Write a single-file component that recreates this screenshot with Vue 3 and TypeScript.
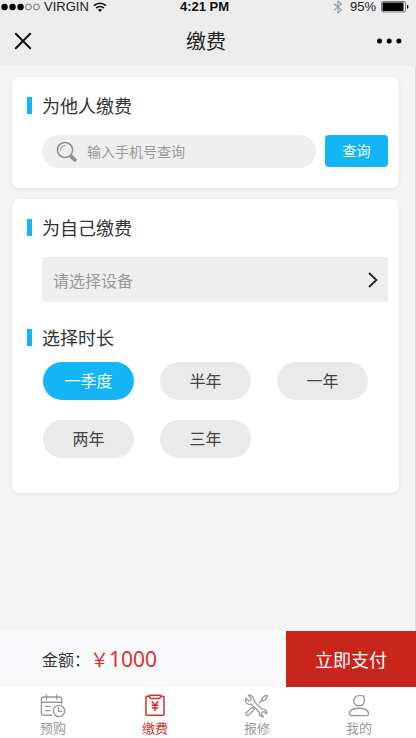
<script setup lang="ts">
import { ref } from 'vue'

const phone = ref<string>('')
const device = ref<string>('')
const durations: string[] = ['一季度', '半年', '一年', '两年', '三年']
const selected = ref<string>('一季度')
const amount = ref<number>(1000)
</script>

<template>
  <div class="page">
    <div class="status">
      <div class="status-left">
        <svg width="40" height="8" viewBox="0 0 40 8" aria-hidden="true">
          <g fill="#000"><circle cx="4.500" cy="4" r="3.200" /><circle cx="12.500" cy="4" r="3.200" /><circle cx="20.500" cy="4" r="3.200" /></g>
          <g fill="none" stroke="#555" stroke-width="0.800"><circle cx="28.500" cy="4" r="2.900" /><circle cx="36.500" cy="4" r="2.900" /></g>
        </svg>
        <span class="carrier">VIRGIN</span>
        <svg width="14" height="10" viewBox="0 0 14 10" fill="none" stroke="#111" stroke-width="1.7" aria-hidden="true">
          <path d="M1 3.7C4.4.4 9.6.4 13 3.7M3.2 6c2.2-2 5.4-2 7.6 0" />
          <path d="M4.9 7.8c1.2-1.1 3-1.1 4.2 0L7 10z" fill="#111" stroke="none" />
        </svg>
      </div>
      <span class="clock">4:21 PM</span>
      <div class="status-right">
        <svg width="10" height="14" viewBox="0 0 10 14" fill="none" stroke="#999" stroke-width="1.1" aria-hidden="true">
          <path d="M1 3.8l7.4 6L5 12.8V1l3.4 3L1 10.2" />
        </svg>
        <span class="battery-text">95%</span>
        <svg width="28" height="12" viewBox="0 0 28 12" aria-hidden="true">
          <rect x=".5" y=".5" width="24" height="10.5" rx="1.5" fill="none" stroke="#777" />
          <rect x="1.5" y="1.5" width="21" height="8.5" rx=".5" fill="#000" />
          <path d="M26 3.8c2 .6 2 3.4 0 4z" fill="#111" />
        </svg>
      </div>
    </div>

    <header class="nav">
      <button class="icon-btn" type="button" aria-label="关闭">
        <svg width="18" height="18" viewBox="0 0 18 18" fill="none" stroke="#111" stroke-width="2" stroke-linecap="round"><path d="M1.8 1.8l14.4 14.4M16.2 1.8L1.8 16.2" /></svg>
      </button>
      <h1>缴费</h1>
      <button class="icon-btn more" type="button" aria-label="更多">
        <svg width="28" height="6" viewBox="0 0 28 6" fill="#000"><circle cx="5.500" cy="3" r="2.500" /><circle cx="15.200" cy="3" r="2.500" /><circle cx="24.900" cy="3" r="2.500" /></svg>
      </button>
    </header>

    <main>
      <section class="card card-search">
        <h2>为他人缴费</h2>
        <form class="search-row" @submit.prevent>
          <label class="search">
            <svg width="22" height="22" viewBox="0 0 22 22" fill="none" stroke="#8f8f8f" aria-hidden="true">
              <circle cx="9" cy="9" r="7.6" stroke-width="1.5" />
              <path d="M4.3 9.2c.1-2.6 1.9-4.5 4.4-4.8" stroke-width="1" stroke-linecap="round" />
              <path d="M14 14.2l1.8 1.8" stroke-width="1.6" />
              <path d="M15.6 15.8l3.2 3" stroke-width="3.8" stroke-linecap="round" />
            </svg>
            <input v-model="phone" type="tel" placeholder="输入手机号查询" aria-label="手机号" />
          </label>
          <button class="query" type="submit">查询</button>
        </form>
      </section>

      <section class="card card-self">
        <h2>为自己缴费</h2>
        <div class="picker">
          <select v-model="device" aria-label="设备">
            <option value="">请选择设备</option>
          </select>
          <svg class="chevron" width="10" height="16" viewBox="0 0 10 16" fill="none" stroke="#222" stroke-width="1.8" aria-hidden="true"><path d="M1 1l7.4 7L1 15" /></svg>
        </div>
        <h2 class="second">选择时长</h2>
        <div class="durations">
          <button
            v-for="item in durations"
            :key="item"
            type="button"
            class="pill"
            :class="{ active: item === selected }"
            :aria-pressed="item === selected"
            @click="selected = item"
          >{{ item }}</button>
        </div>
      </section>
    </main>

    <div class="pay">
      <div class="total"><span class="total-label">金额：</span><span class="price"><span class="yen">￥</span>{{ amount }}</span></div>
      <button class="pay-btn" type="button">立即支付</button>
    </div>

    <nav class="tabs">
      <a href="#book">
        <svg width="26" height="24" viewBox="0 0 26 24" fill="none" stroke="#999" stroke-width="1.4" stroke-linecap="round" aria-hidden="true">
          <path d="M11.5 21.3H3.4a2 2 0 0 1-2-2V5a2 2 0 0 1 2-2h16.200a2 2 0 0 1 2 2v5M1.4 8.3h20.2M6.5 1v4.2M16.6 1v4.2M5.4 12.4h4.8M5.4 16.6h4.8" />
          <circle cx="19" cy="17" r="5.6" /><path d="M18.5 13.8v3.6h3.2" />
        </svg>
        <span>预购</span>
      </a>
      <a href="#pay" class="current" aria-current="page">
        <svg width="26" height="24" viewBox="0 0 26 24" fill="none" stroke="#d5322c" stroke-width="1.5" stroke-linejoin="round" aria-hidden="true">
          <path d="M7 2.300H4.700a.7.7 0 0 0-.7.7v17.500a.7.7 0 0 0 .7.7h16.600a.7.7 0 0 0 .7-.7V3a.7.7 0 0 0-.7-.7H19" />
          <path d="M7.5 1.2h11v1.2c0 1.2-.8 2-2 2h-7c-1.200 0-2-.8-2-2z" />
          <path d="M9.800 7.300l3.200 3.900 3.200-3.900M9.600 11.300h6.800M9.600 14h6.800M13 11.200v6" stroke-width="1.500" />
        </svg>
        <span>缴费</span>
      </a>
      <a href="#repair">
        <svg width="26" height="24" viewBox="0 0 26 24" fill="none" stroke="#999" stroke-width="1.300" stroke-linejoin="round" aria-hidden="true">
          <path d="M4.300 1.200l3 3-.5 2.200-2.300.5-2.600-2.600c-1.100 2.500.2 5.300 2.800 6 .9.200 1.700.1 2.500-.2l8 7.900c-.5 2.900 1.400 5 4.300 4.900l-2.200-2.400.6-2.300 2.300-.6 2.500 2.400c.5-3-1.800-5.500-5-5.100L9.900 7.200c.8-3.400-2.200-6.900-5.600-6z" />
          <path d="M14.800 9.200l3-3.200M17.500 5.100c1-2 2.500-3.200 5-4l.9.900c-.7 2.400-2 4-4.100 5z" />
          <path d="M8.300 13.200l-6 5.500c-1.200 1.400.9 3.700 2.400 2.400l5.800-5.800z" />
        </svg>
        <span>报修</span>
      </a>
      <a href="#mine">
        <svg width="26" height="24" viewBox="0 0 26 24" fill="none" stroke="#999" stroke-width="1.400" aria-hidden="true">
          <path d="M13 1.600h3.600c1 0 1.600.6 1.600 1.600v3.600c0 3.100-2.200 5-5.200 5s-5.200-2.100-5.200-5 2.200-5.200 5.200-5.200z" />
          <path d="M6.200 21.600c-2 0-3-1-2.700-2.600.6-3.100 4.600-4.800 9.500-4.800s8.900 1.700 9.500 4.800c.3 1.600-.7 2.600-2.700 2.600z" />
        </svg>
        <span>我的</span>
      </a>
    </nav>
  </div>
</template>

<style>
body { margin: 0; background: #f4f4f4; }
</style>

<style scoped>
* { box-sizing: border-box; }
.page {
  display: flex;
  flex-direction: column;
  min-height: 100vh;
  background: #f4f4f4;
  color: #333;
  font-family: "Noto Sans CJK SC", sans-serif;
}
button, input, select { font-family: inherit; margin: 0; border: 0; }
button { padding: 0; cursor: pointer; }
svg { flex: none; display: block; }
.status {
  display: grid;
  grid-template-columns: 1fr auto 1fr;
  grid-template-rows: 13px;
  height: 16px;
  padding-right: 7px;
  align-items: center;
  background: #ececec;
  color: #222;
  font-family: "Liberation Sans", sans-serif;
  font-size: 13px;
  line-height: 13px;
}
.status-left, .status-right { display: flex; align-items: center; gap: 4px; height: 13px; }
.status-right { justify-content: flex-end; gap: 7px; }
.battery-text { margin-right: -2px; }
.clock { color: #111; font-weight: bold; }
.nav {
  display: grid;
  grid-template-columns: 1fr auto 1fr;
  align-items: center;
  height: 50px;
  padding: 0 14px;
  background: #ececec;
}
.icon-btn { justify-self: start; background: none; }
.more { justify-self: end; }
h1 { margin: 0; padding-right: 4px; font-size: 20px; font-weight: 400; line-height: 28px; color: #222; }
main {
  display: flex;
  flex: 1;
  flex-direction: column;
  gap: 11px;
  padding: 11px 16px 20px 12px;
  border-right: 1px solid #dcdcdc;
}
.card {
  padding: 16px 11px 20px 30px;
  border-radius: 8px;
  background: #fff;
  box-shadow: 0 1px 4px rgba(0, 0, 0, 0.07);
}
.card-self { padding-bottom: 35px; }
h2 {
  display: flex;
  align-items: center;
  gap: 10px;
  margin: 0 0 17px -15px;
  font-size: 18px;
  font-weight: 400;
  line-height: 25px;
}
h2::before { content: ""; width: 5px; height: 17px; background: #13b5f5; }
.second { margin-top: 23px; margin-bottom: 12px; }
.search-row { display: flex; align-items: flex-start; gap: 9px; }
.search {
  display: flex;
  flex: 1;
  align-items: center;
  gap: 9px;
  min-width: 0;
  height: 33px;
  padding: 0 14px;
  border-radius: 17px;
  background: #efefef;
}
.search input {
  flex: 1;
  min-width: 0;
  padding: 0 0 2px;
  outline: 0;
  background: none;
  color: #333;
  font-size: 14px;
}
.search input::placeholder { color: #999; opacity: 1; }
.query {
  width: 63px;
  height: 32px;
  padding-bottom: 2px;
  border-radius: 4px;
  background: #13b5f5;
  color: #fff;
  font-size: 14px;
}
.picker { position: relative; }
.picker select {
  display: block;
  width: 100%;
  height: 45px;
  padding: 0 32px 0 11px;
  border-radius: 2px;
  appearance: none;
  background: #eee;
  color: #999;
  font-size: 16px;
}
.chevron { position: absolute; top: 15px; right: 10px; pointer-events: none; }
.durations { display: flex; flex-wrap: wrap; gap: 20px 26px; padding-left: 1px; }
.pill {
  width: 91px;
  height: 38px;
  padding-bottom: 2px;
  border-radius: 19px;
  background: #eaeaea;
  color: #444;
  font-size: 16px;
}
.pill.active { background: #13b5f5; color: #fff; }
.pay { display: flex; height: 56px; background: #f9f9fc; }
.total { display: flex; flex: 1; align-items: center; padding-left: 42px; }
.total-label { font-size: 16px; }
.price { color: #d5322c; font-family: "Noto Sans", "Noto Sans CJK SC", sans-serif; font-size: 21px; }
.yen { font-size: 19px; }
.pay-btn { width: 130px; padding-bottom: 1px; background: #c9261b; color: #fff; font-size: 18px; }
.tabs {
  display: grid;
  grid-template-columns: repeat(4, 1fr);
  height: 51px;
  padding: 7px 6px 0 2px;
  background: #fff;
}
.tabs a {
  display: flex;
  flex-direction: column;
  align-items: center;
  color: #999;
  font-size: 13px;
  line-height: 20px;
  text-decoration: none;
}
.tabs .current { color: #d5322c; }
</style>
